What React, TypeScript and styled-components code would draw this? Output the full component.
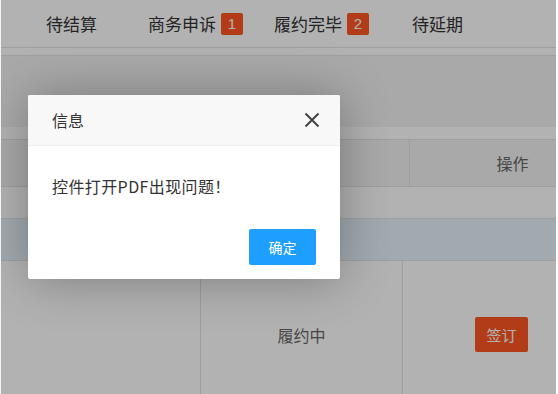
import React from "react";
import styled, { createGlobalStyle } from "styled-components";

const Global = createGlobalStyle`
  html, body { margin: 0; padding: 0; background: #fff; }
  body { font-family: "Noto Sans CJK SC", "Noto Sans", sans-serif; }
  * { box-sizing: border-box; }
`;

const Frame = styled.div`
  position: relative;
  width: 558px;
  height: 394px;
  overflow: hidden;
  background: #fff;
  border-left: 1px solid #f4f4f4;
  border-right: 2px solid #fff;
  display: flex;
  flex-direction: column;
`;

const TabBar = styled.div`
  height: 48px;
  flex: none;
  display: flex;
  align-items: center;
  padding-left: 45px;
  border-bottom: 1px solid #e2e2e2;
`;

const Tab = styled.div<{ $mr?: number }>`
  display: flex;
  align-items: center;
  gap: 5px;
  margin-right: ${(p) => p.$mr ?? 0}px;
  font-size: 17px;
  color: #333;
  line-height: 24px;
`;

const Badge = styled.span`
  display: inline-flex;
  align-items: center;
  justify-content: center;
  width: 22px;
  height: 22px;
  border-radius: 2px;
  background: #ff5722;
  color: #fff;
  font-size: 15px;
  font-family: "Liberation Sans", sans-serif;
`;

const Spacer = styled.div`
  height: 8px;
  flex: none;
  border-bottom: 1px solid #e2e2e2;
`;

const GrayBand = styled.div`
  height: 71px;
  flex: none;
  background: #f2f2f2;
`;

const WhiteBand = styled.div`
  height: 13px;
  flex: none;
  background: #fff;
  border-bottom: 1px solid #e2e2e2;
`;

const Row = styled.div<{ $h: number; $bg: string }>`
  height: ${(p) => p.$h}px;
  flex: none;
  display: flex;
  width: 620px;
  background: ${(p) => p.$bg};
  border-bottom: 1px solid #e2e2e2;
`;

const Cell = styled.div<{ $w: number; $line?: boolean }>`
  width: ${(p) => p.$w}px;
  flex: none;
  display: flex;
  align-items: center;
  justify-content: center;
  font-size: 16px;
  color: #666;
  border-left: ${(p) => (p.$line ? "1px solid #e2e2e2" : "none")};
`;

const BodyRow = styled.div`
  flex: 1;
  display: flex;
  width: 620px;
  background: #fff;
  & > div {
    padding-top: 14px;
  }
`;

const DangerBtn = styled.div`
  width: 53px;
  height: 35px;
  border-radius: 2px;
  background: #ff5722;
  color: #fff;
  font-size: 15px;
  display: flex;
  align-items: center;
  justify-content: center;
`;

const Shade = styled.div`
  position: absolute;
  inset: 0;
  background: rgba(0, 0, 0, 0.3);
`;

const Dialog = styled.div`
  position: absolute;
  left: 27px;
  top: 95px;
  width: 312px;
  background: #fff;
  border-radius: 2px;
  box-shadow: 1px 1px 50px rgba(0, 0, 0, 0.3);
  overflow: hidden;
`;

const Title = styled.div`
  height: 51px;
  display: flex;
  align-items: center;
  justify-content: space-between;
  padding: 0 20px 0 24px;
  background: #f8f8f8;
  border-bottom: 1px solid #eee;
  font-size: 16px;
  color: #333;
`;

const CloseIcon = styled.svg`
  width: 16px;
  height: 16px;
  display: block;
`;

const Content = styled.div`
  padding: 28px 24px 31px;
  font-size: 16px;
  line-height: 24px;
  color: #333;
  letter-spacing: 0.4px;
`;

const Footer = styled.div`
  display: flex;
  justify-content: flex-end;
  padding: 0 24px 14px;
`;

const PrimaryBtn = styled.div`
  width: 67px;
  height: 36px;
  border-radius: 2px;
  background: #1e9fff;
  color: #fff;
  font-size: 14px;
  display: flex;
  align-items: center;
  justify-content: center;
`;

export default function App() {
  return (
    <>
      <Global />
      <Frame>
        <TabBar>
          <Tab $mr={51}>待结算</Tab>
          <Tab $mr={31}>
            商务申诉<Badge>1</Badge>
          </Tab>
          <Tab $mr={43}>
            履约完毕<Badge>2</Badge>
          </Tab>
          <Tab>待延期</Tab>
        </TabBar>
        <Spacer />
        <GrayBand />
        <WhiteBand />
        <Row $h={47} $bg="#f2f2f2">
          <Cell $w={408} />
          <Cell $w={206} $line>
            操作
          </Cell>
        </Row>
        <Row $h={32} $bg="#fff" />
        <Row $h={42} $bg="#e9f4fc" />
        <BodyRow>
          <Cell $w={199} />
          <Cell $w={202} $line>
            履约中
          </Cell>
          <Cell $w={198} $line>
            <DangerBtn>签订</DangerBtn>
          </Cell>
        </BodyRow>
        <Shade />
        <Dialog>
          <Title>
            信息
            <CloseIcon viewBox="0 0 16 16">
              <path
                d="M1.5 1.5 L14.5 14.5 M14.5 1.5 L1.5 14.5"
                stroke="#444"
                strokeWidth="2"
                fill="none"
              />
            </CloseIcon>
          </Title>
          <Content>控件打开PDF出现问题！</Content>
          <Footer>
            <PrimaryBtn>确定</PrimaryBtn>
          </Footer>
        </Dialog>
      </Frame>
    </>
  );
}
